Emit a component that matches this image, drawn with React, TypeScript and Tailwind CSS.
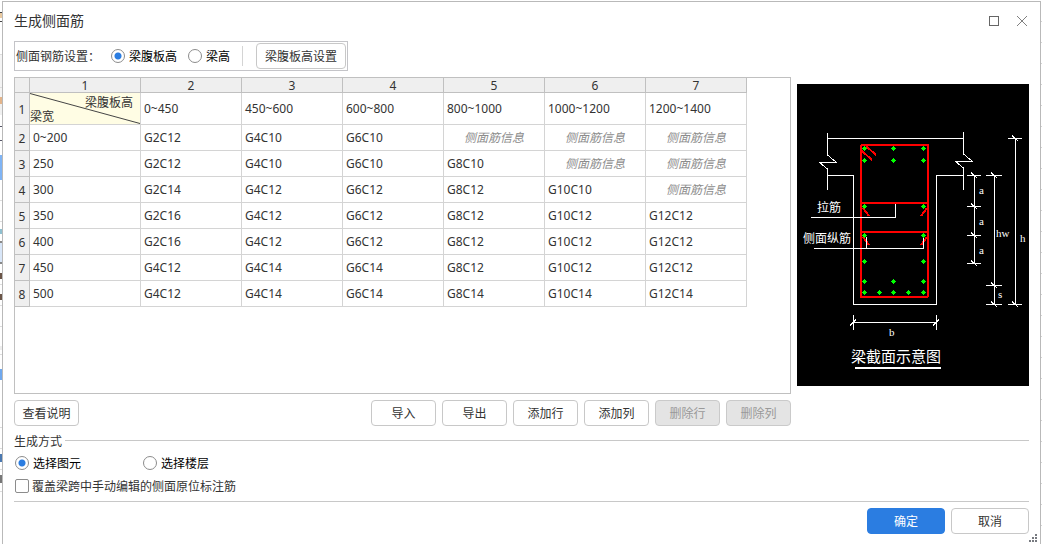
import type { ReactNode } from "react";

const ranges = ["0~450", "450~600", "600~800", "800~1000", "1000~1200", "1200~1400"];

// An empty string is a cell that has not been filled in yet.
const rows = [
  { width: "0~200", bars: ["G2C12", "G4C10", "G6C10", "", "", ""] },
  { width: "250", bars: ["G2C12", "G4C10", "G6C10", "G8C10", "", ""] },
  { width: "300", bars: ["G2C14", "G4C12", "G6C12", "G8C12", "G10C10", ""] },
  { width: "350", bars: ["G2C16", "G4C12", "G6C12", "G8C12", "G10C12", "G12C12"] },
  { width: "400", bars: ["G2C16", "G4C12", "G6C12", "G8C12", "G10C12", "G12C12"] },
  { width: "450", bars: ["G4C12", "G4C14", "G6C14", "G8C12", "G10C12", "G12C12"] },
  { width: "500", bars: ["G4C12", "G4C14", "G6C14", "G8C14", "G10C14", "G12C14"] },
];

// Edge of the window behind the dialog: [height, colour]
const leftEdge: [number, string][] = [
  [12, "#fff"], [1, "#444"], [5, "#e9c9a0"], [3, "#fff"], [1, "#444"], [32, "#fff"],
  [1, "#ddd"], [32, "#f4f4f4"], [1, "#ddd"], [9, "#f4f4f4"], [7, "#e3b48a"], [11, "#f0f0f0"],
  [11, "#fff"], [1, "#556"], [13, "#fff"], [1, "#556"], [14, "#fff"], [25, "#7fb4f5"],
  [20, "#fff"], [1, "#ddd"], [20, "#fff"], [1, "#ddd"], [7, "#fff"], [5, "#8fc0d0"],
  [7, "#fff"], [2, "#888"], [19, "#d8e6f8"], [2, "#888"], [9, "#fff"], [6, "#6a5548"],
  [5, "#fff"], [1, "#ddd"], [9, "#fff"], [6, "#6a5548"], [5, "#fff"], [1, "#ddd"],
  [20, "#fff"], [1, "#ddd"], [19, "#fff"], [4, "#eee"], [4, "#fff"], [1, "#ddd"],
  [14, "#fff"], [11, "#6fa8ee"], [47, "#fff"], [1, "#ddd"], [20, "#fff"], [1, "#ddd"],
  [5, "#fff"], [8, "#4a78b0"], [7, "#fff"], [1, "#ddd"], [5, "#fff"], [8, "#777"],
  [8, "#fff"], [1, "#ddd"],
];

type ButtonProps = { children: ReactNode; size?: string; primary?: boolean; disabled?: boolean };

function Button({ children, size = "w-[65px]", primary, disabled }: ButtonProps) {
  const look = primary
    ? "border-[#2b7de1] bg-[#2b7de1] text-white"
    : disabled
      ? "border-[#cacaca] bg-[#e4e4e4] text-[#999]"
      : "border-[#c8c8c8] bg-white text-[#333]";
  return (
    <button type="button" disabled={disabled} className={`h-[26px] shrink-0 rounded-[4px] border pt-0.5 ${size} ${look}`}>
      {children}
    </button>
  );
}

function Radio({ name, label, checked }: { name: string; label: string; checked?: boolean }) {
  return (
    <label className="flex items-center gap-1 text-black">
      <input
        type="radio"
        name={name}
        defaultChecked={checked}
        className="size-3.5 appearance-none rounded-full border border-[#8c8c8c] bg-white checked:bg-[radial-gradient(circle,#2b7de1_3px,transparent_4px)]"
      />
      <span className="pt-0.5">{label}</span>
    </label>
  );
}

function RebarTable() {
  const head = "border-r border-b border-[#c0c0c0] bg-[#efefef] px-0 pt-0.5 pb-0 font-normal";
  const cell = "border-r border-b border-[#d4d4d4] py-0 pr-0 pl-[3px]";
  return (
    <table className="table-fixed border-separate border-spacing-0">
      <colgroup>
        <col className="w-[15px]" />
        <col className="w-[111px]" />
        {ranges.map((r) => (
          <col key={r} className="w-[101px]" />
        ))}
      </colgroup>
      <thead>
        <tr className="h-[15px] leading-3">
          <th className={head} />
          {[1, 2, 3, 4, 5, 6, 7].map((n) => (
            <th key={n} className={head}>{n}</th>
          ))}
        </tr>
      </thead>
      <tbody>
        <tr className="h-8">
          <th className={head}>1</th>
          <td className="relative border-r border-b border-[#d4d4d4] bg-[#fffde4] p-0 leading-[14px]">
            <div className="pt-0.5 pr-[7px] text-right">梁腹板高</div>
            <div>梁宽</div>
            <svg className="absolute inset-0 size-full" viewBox="0 0 110 31" preserveAspectRatio="none" stroke="#444">
              <line x1="0" y1="0.5" x2="110" y2="30.5" />
            </svg>
          </td>
          {ranges.map((r) => (
            <td key={r} className={cell}>{r}</td>
          ))}
        </tr>
        {rows.map((row, i) => (
          <tr key={row.width} className="h-[26px]">
            <th className={head}>{i + 2}</th>
            <td className={cell}>{row.width}</td>
            {row.bars.map((bar, j) =>
              bar ? (
                <td key={j} className={cell}>{bar}</td>
              ) : (
                <td key={j} className="border-r border-b border-[#d4d4d4] p-0 text-center text-[#8c8c8c] italic">侧面筋信息</td>
              ),
            )}
          </tr>
        ))}
      </tbody>
    </table>
  );
}

const dots = [
  [67, 64], [96, 64], [126, 64],
  [67, 76], [96, 76], [126, 76],
  [67, 122], [126, 122],
  [67, 151], [126, 151],
  [67, 177], [126, 177],
  [67, 197], [96, 197], [126, 197],
  [67, 208], [82, 208], [96, 208], [111, 208], [126, 208],
];

// Dimension ticks: centre x, centre y, half width
const ticks = [
  [177, 91, 7], [177, 122, 7], [177, 151, 7], [177, 179, 7],
  [197, 91, 8], [197, 201, 8], [197, 220, 8],
  [218, 54, 7], [218, 220, 7],
];

function BeamSection() {
  return (
    <svg width="232" height="302" viewBox="0 0 232 302" className="mt-[7px] bg-black" role="img" aria-label="梁截面示意图">
      <g fill="none" stroke="#fff" shapeRendering="crispEdges">
        <path d="M30.5 49V71L39.5 78.5H22.5L30.5 85V106" />
        <path d="M166.5 48V70L175.5 77.5H158.5L166.5 84V106" />
        <path d="M30 54.5H166M30 91.5H56.5V220.5H139.5V91.5H166" />
        <path d="M177.5 91V180M197.5 91V221M218.5 54V221" />
        <path d="M56.5 231V246M139.5 231V246M56 238.5H140M53 241.5L59 235.5M136 241.5L142 235.5" />
        {ticks.map(([x, y, w]) => (
          <path key={`${x}-${y}`} d={`M${x - w} ${y + 0.5}H${x + w}M${x - 3} ${y - 2.5}L${x + 3} ${y + 3}`} />
        ))}
      </g>
      <g fill="none" stroke="#f00" strokeWidth="2" shapeRendering="crispEdges">
        <rect x="64" y="61" width="67" height="152" rx="1" />
        <path d="M64 119H131M64 148H131" />
        <path d="M69 62L79 71M65 67L75 76" />
        <path d="M66 124L72 132M130 124L124 132M66 153L72 161M130 153L124 161" />
      </g>
      <g fill="none" stroke="#fff" shapeRendering="crispEdges">
        <path d="M14 133.5H98.5V120M17 164.5H126.5V153M69.5 164V153" />
        <path d="M58 284H144" strokeWidth="2" />
      </g>
      <g fill="#0f0" shapeRendering="crispEdges">
        {dots.map(([x, y]) => (
          <path key={`${x}-${y}`} d={`M${x} ${y - 2}h1v1h1v1h1v1h-1v1h-1v1h-1v-1h-1v-1h-1v-1h1v-1h1z`} />
        ))}
      </g>
      <g fill="#fff" className="font-['Noto_Sans_CJK_SC',sans-serif] text-xs">
        <text x="20" y="128">拉筋</text>
        <text x="6" y="159">侧面纵筋</text>
        <text x="54" y="278" className="text-[15px]">梁截面示意图</text>
      </g>
      <g fill="#fff" className="font-['Liberation_Serif',serif] text-[11px]">
        <text x="182" y="110">a</text>
        <text x="182" y="141">a</text>
        <text x="182" y="170">a</text>
        <text x="199" y="153">hw</text>
        <text x="223" y="158">h</text>
        <text x="201" y="214">s</text>
        <text x="92" y="252">b</text>
      </g>
    </svg>
  );
}

export default function App() {
  return (
    <div className="flex min-h-screen bg-white pt-px font-['Noto_Sans','Noto_Sans_CJK_SC',sans-serif] text-xs text-[#333]">
      <div className="-mt-px w-0.5 shrink-0">
        {leftEdge.map(([height, background], i) => (
          <div key={i} style={{ height, background }} />
        ))}
      </div>

      <main className="relative flex min-w-0 flex-1 flex-col border-x border-t border-[#b9b9b9] px-[11px] pb-2.5">
        <header className="flex h-[39px] shrink-0 items-center justify-between pb-0.5">
          <h1 className="text-sm">生成侧面筋</h1>
          <div className="flex gap-3.5">
            <button type="button" aria-label="最大化">
              <svg width="14" height="14" fill="none" stroke="#666">
                <rect x="2.5" y="2.5" width="9" height="9" />
              </svg>
            </button>
            <button type="button" aria-label="关闭">
              <svg width="14" height="14" fill="none" stroke="#808080">
                <path d="M2 2L12 12M12 2L2 12" />
              </svg>
            </button>
          </div>
        </header>

        <div className="flex h-[30px] shrink-0 items-center gap-[11px] self-start border border-[#c4c4c8] px-px">
          <span className="pt-0.5">侧面钢筋设置：</span>
          <Radio name="basis" label="梁腹板高" checked />
          <Radio name="basis" label="梁高" />
          <span className="mr-0.5 ml-px h-5 w-px bg-[#d4d4d4]" />
          <Button size="px-2">梁腹板高设置</Button>
        </div>

        <div className="mt-1.5 grid flex-1 grid-cols-[minmax(0,1fr)_auto] items-start gap-x-1.5">
          <div className="h-full overflow-auto border border-[#c0c0c0]">
            <RebarTable />
          </div>
          <BeamSection />
        </div>

        <div className="mt-1.5 flex shrink-0 gap-1.5 pr-[238px]">
          <Button>查看说明</Button>
          <div className="flex-1" />
          <Button>导入</Button>
          <Button>导出</Button>
          <Button>添加行</Button>
          <Button>添加列</Button>
          <Button disabled>删除行</Button>
          <Button disabled>删除列</Button>
        </div>

        <section className="mt-1.5 border-b border-[#c8c8c8] pb-1.5">
          <div className="flex h-[17px] items-center gap-[3px]">
            <h2 className="pt-0.5">生成方式</h2>
            <div className="h-px flex-1 bg-[#c8c8c8]" />
          </div>
          <div className="mt-[5px] flex h-[18px] gap-[62px] pl-px">
            <Radio name="scope" label="选择图元" checked />
            <Radio name="scope" label="选择楼层" />
          </div>
          <label className="mt-[5px] flex h-[18px] items-center gap-[3px] pl-px">
            <input type="checkbox" className="size-3.5 appearance-none rounded-[2px] border border-[#8c8c8c] bg-white checked:bg-[#2b7de1]" />
            <span className="pt-0.5">覆盖梁跨中手动编辑的侧面原位标注筋</span>
          </label>
        </section>

        <footer className="mt-1.5 flex shrink-0 justify-end gap-1.5">
          <Button size="w-[78px]" primary>确定</Button>
          <Button size="w-[78px]">取消</Button>
        </footer>

        <svg className="absolute right-[3px] bottom-0.5" width="8" height="8" fill="#777a80">
          <path d="M6 0h2v2h-2zM3 3h2v2h-2zM6 3h2v2h-2zM0 6h2v2h-2zM3 6h2v2h-2zM6 6h2v2h-2z" />
        </svg>
      </main>

      <div className="w-px shrink-0 bg-[repeating-linear-gradient(#fff_0_20px,#d4d4d4_20px_21px)]" />
    </div>
  );
}
